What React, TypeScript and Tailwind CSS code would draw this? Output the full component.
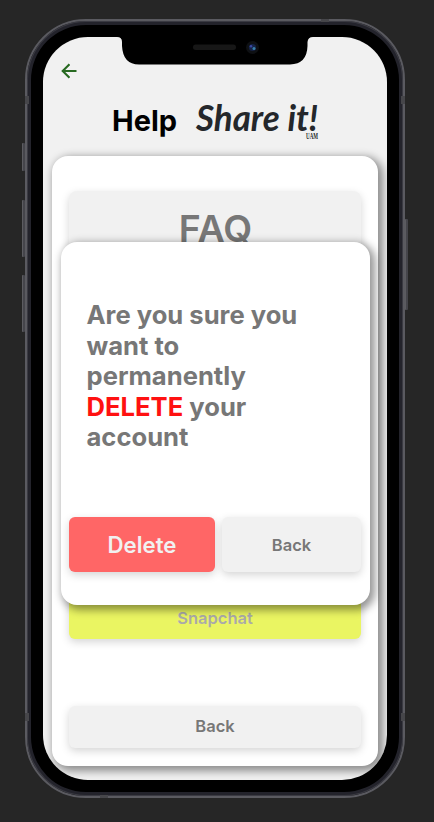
import React from "react";

const raised = "shadow-[0_3px_8px_rgba(0,0,0,0.17)]";
const panel = "bg-white shadow-[3px_3px_9px_2px_rgba(0,0,0,0.42)]";

function SideButton({ className }: { className: string }) {
  return <div className={`absolute w-[3px] rounded-[1px] border-l border-[#5c5c61] bg-[#45454b] ${className}`} />;
}

function Notch() {
  return (
    <svg className="absolute left-[74px] top-0" width="196" height="28" viewBox="0 0 196 28">
      <path d="M0 0 Q5 0 5 5 V9 Q6 27.500 22 27.500 H173 Q190 27 190.500 9 V5 Q191 0 196 0Z" fill="#000" />
      <rect x="76" y="7.500" width="43" height="5.500" rx="2.750" fill="#171717" />
      <circle cx="135.500" cy="10.500" r="6.500" fill="#0e1013" />
      <circle cx="135.500" cy="10.500" r="3.600" fill="#152245" />
      <circle cx="134" cy="9.300" r="1.300" fill="#3846a0" />
      <circle cx="137" cy="11.500" r="1.500" fill="#3981ab" />
    </svg>
  );
}

function Logo() {
  return (
    <svg className="block overflow-visible" width="132" height="46" viewBox="0 0 132 46" fill="#24272b">
      <text x="2" y="34" fontFamily="Lato, sans-serif" fontStyle="italic" fontWeight="700" fontSize="37" textLength="122" lengthAdjust="spacingAndGlyphs">Share it!</text>
      <text x="112" y="42" fontFamily="'Liberation Serif', serif" fontSize="7.500" fontWeight="700" textLength="12" lengthAdjust="spacingAndGlyphs">UAM</text>
    </svg>
  );
}

export default function App() {
  return (
    <div className="flex h-[822px] w-[434px] justify-center overflow-hidden bg-[#262626] pt-[19px] font-['Inter',sans-serif]">
      <div className="relative mr-[4px] h-[779px] w-[380px] rounded-[61px] border-2 border-[#5a5a60] bg-black shadow-[inset_0_0_0_1px_#3a3a42,inset_0_0_0_4px_#23232b]">
        <SideButton className="-left-[5px] top-[122px] h-[28px]" />
        <SideButton className="-left-[5px] top-[179px] h-[57px]" />
        <SideButton className="-left-[5px] top-[254px] h-[57px]" />
        <SideButton className="-right-[5px] top-[198px] h-[91px]" />
        <div className="absolute -left-[2px] top-[75px] h-[8px] w-[4px] bg-[#46464a]" />
        <div className="absolute -right-[2px] top-[75px] h-[8px] w-[4px] bg-[#46464a]" />
        <div className="absolute -left-[2px] top-[692px] h-[8px] w-[4px] bg-[#46464a]" />
        <div className="absolute -right-[2px] top-[692px] h-[8px] w-[4px] bg-[#46464a]" />
        <div className="absolute -top-[2px] right-[74px] h-[3px] w-[8px] bg-[#46464a]" />
        <div className="absolute -bottom-[2px] left-[73px] h-[3px] w-[8px] bg-[#46464a]" />

        <div className="relative ml-[16px] mt-[16px] flex h-[743px] w-[344px] flex-col overflow-hidden rounded-[45px] bg-[#f1f1f1]">
          <Notch />
          <header className="h-[119px] shrink-0 pt-[26px]">
            <svg className="ml-[18px]" width="17" height="16" viewBox="0 0 17 16" fill="none" stroke="#286a22" strokeWidth="2.100">
              <path d="M15.500 8H2M8.500 1.200L1.700 8l6.800 6.800" />
            </svg>
            <div className="flex pl-[69px] pt-[18px]">
              <h1 className="w-[82px] pt-[6px] text-[29px] font-bold leading-[36px] text-black">Help</h1>
              <Logo />
            </div>
          </header>
          <main className={`ml-[9px] flex h-[610px] w-[326px] shrink-0 flex-col justify-between rounded-[16px] pb-[18px] pl-[17px] pr-[17px] pt-[35px] ${panel}`}>
            <button className={`h-[76px] w-full rounded-[8px] bg-[#f1f1f1] pl-px text-[37.500px] font-semibold text-[#777] ${raised}`}>FAQ</button>
            <div className="mt-auto flex flex-col gap-[67px]">
              <button className={`h-[42px] w-full rounded-[6px] bg-[#eaf562] text-[16.500px] font-semibold text-[#aaa] ${raised}`}>Snapchat</button>
              <button className={`h-[42px] w-full rounded-[6px] bg-[#f1f1f1] pb-[2px] text-[16.500px] font-semibold text-[#777] ${raised}`}>Back</button>
            </div>
          </main>

          <div role="dialog" className={`absolute left-[18px] top-[205px] flex h-[363px] w-[309px] flex-col justify-between rounded-[16px] pb-[33px] pl-[8px] pr-[9px] pt-[58px] ${panel}`}>
            <p className="ml-[17.500px] w-[230px] text-[25.600px] font-bold leading-[30.500px] text-[#777]">
              Are you sure you want to permanently <span className="text-[#ff1111]">DELETE</span> your account
            </p>
            <div className="flex gap-[7px]">
              <button className={`h-[55px] w-[146px] rounded-[6px] bg-[#ff6666] text-[22.200px] font-semibold text-[#f1f1f1] ${raised}`}>Delete</button>
              <button className={`h-[55px] w-[139px] rounded-[6px] bg-[#f1f1f1] pt-[2px] text-[16.500px] font-semibold text-[#777] ${raised}`}>Back</button>
            </div>
          </div>
        </div>
      </div>
    </div>
  );
}
